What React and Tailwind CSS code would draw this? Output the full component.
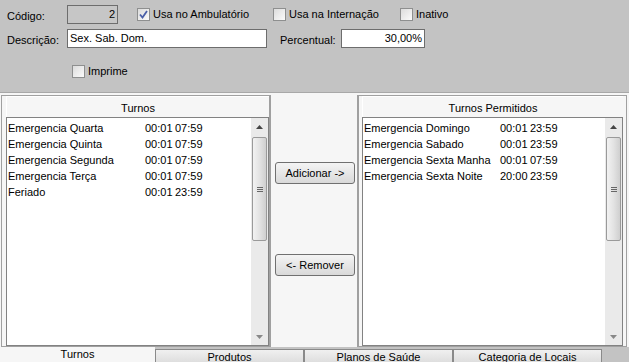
import React from 'react'

const FONT = { fontFamily: '"Liberation Sans", Arial, sans-serif' }

function Check({ checked }) {
  return (
    <span className="inline-flex h-[13px] w-[13px] shrink-0 items-center justify-center border border-[#8e8f8f] bg-gradient-to-br from-[#dcdcdc] to-[#fbfbfb]">
      {checked ? (
        <svg width="9" height="9" viewBox="0 0 9 9">
          <path d="M1 4.5 L3.5 7.5 L8 1" fill="none" stroke="#4a5fa8" strokeWidth="1.8" />
        </svg>
      ) : null}
    </span>
  )
}

function CheckLabel({ checked, label, className = '' }) {
  return (
    <div className={`flex items-center gap-[3px] whitespace-nowrap ${className}`}>
      <Check checked={checked} />
      <span>{label}</span>
    </div>
  )
}

function Scrollbar({ thumbTop = 19, thumbHeight = 104 }) {
  return (
    <div className="relative flex w-[17px] shrink-0 flex-col bg-[#eaeaea]">
      <div className="flex h-[17px] items-center justify-center">
        <svg width="7" height="4" viewBox="0 0 7 4">
          <path d="M0 4 L3.5 0 L7 4 Z" fill="#444" />
        </svg>
      </div>
      <div
        className="absolute left-[1px] right-[1px] rounded-[2px] border border-[#9a9a9a] bg-gradient-to-r from-[#f2f2f2] via-[#e3e3e3] to-[#cfcfcf]"
        style={{ top: thumbTop, height: thumbHeight }}
      >
        <div className="flex h-full flex-col items-center justify-center gap-[1px]">
          <div className="h-px w-[6px] bg-[#666]" />
          <div className="h-px w-[6px] bg-[#666]" />
          <div className="h-px w-[6px] bg-[#666]" />
        </div>
      </div>
      <div className="flex-1" />
      <div className="flex h-[17px] items-center justify-center">
        <svg width="7" height="4" viewBox="0 0 7 4">
          <path d="M0 0 L3.5 4 L7 0 Z" fill="#888" />
        </svg>
      </div>
    </div>
  )
}

function ListPanel({ title, rows, nameW, className = '' }) {
  return (
    <div className={`flex flex-col border border-[#a0a0a0] ${className}`}>
      <div className="flex h-[21px] justify-center border-t border-l border-white pt-[5px] leading-[13px]">{title}</div>
      <div className="flex flex-1 border border-[#828282] bg-white">
        <div className="flex-1 pt-[2px] pl-[1px]">
          {rows.map((r) => (
            <div key={r[0]} className="flex h-[16px] items-center whitespace-nowrap">
              <span className="shrink-0" style={{ width: nameW }}>{r[0]}</span>
              <span className="w-[30px] shrink-0">{r[1]}</span>
              <span>{r[2]}</span>
            </div>
          ))}
        </div>
        <Scrollbar />
      </div>
    </div>
  )
}

function WinButton({ children }) {
  return (
    <button
      type="button"
      className="flex h-[22px] w-[80px] items-center justify-center rounded-[3px] border border-[#707070] bg-gradient-to-b from-[#f4f4f4] to-[#d9d9d9]"
    >
      {children}
    </button>
  )
}

const turnos = [
  ['Emergencia Quarta', '00:01', '07:59'],
  ['Emergencia Quinta', '00:01', '07:59'],
  ['Emergencia Segunda', '00:01', '07:59'],
  ['Emergencia Terça', '00:01', '07:59'],
  ['Feriado', '00:01', '23:59'],
]

const permitidos = [
  ['Emergencia Domingo', '00:01', '23:59'],
  ['Emergencia Sabado', '00:01', '23:59'],
  ['Emergencia Sexta Manha', '00:01', '07:59'],
  ['Emergencia Sexta Noite', '20:00', '23:59'],
]

const tabs = ['Turnos', 'Produtos', 'Planos de Saúde', 'Categoria de Locais']

export default function App() {
  return (
    <div className="flex h-[362px] w-[629px] flex-col overflow-hidden bg-[#c3c3c3] text-[11px] text-black" style={FONT}>
      {/* cabeçalho */}
      <div className="flex h-[93px] shrink-0 flex-col border-b border-[#a8a8a8] pl-[7px] pt-[5px]">
        <div className="flex h-[19px] items-center">
          <span className="w-[60px] pt-[4px]">Código:</span>
          <div className="flex h-[19px] w-[51px] items-center justify-end border border-[#6d6d6d] bg-[#c6c6c6] pr-[2px]">2</div>
          <CheckLabel checked label="Usa no Ambulatório" className="ml-[19px] w-[136px]" />
          <CheckLabel label="Usa na Internação" className="w-[127px]" />
          <CheckLabel label="Inativo" />
        </div>
        <div className="mt-[5px] flex h-[19px] items-center">
          <span className="w-[60px] pt-[4px]">Descrição:</span>
          <div className="flex h-[19px] w-[200px] items-center border border-[#6d6d6d] bg-white pl-[2px]">Sex. Sab. Dom.</div>
          <span className="ml-[13px] w-[61px] pt-[4px]">Percentual:</span>
          <div className="flex h-[19px] w-[84px] items-center justify-end border border-[#6d6d6d] bg-white pr-[2px]">30,00%</div>
        </div>
        <CheckLabel label="Imprime" className="ml-[65px] mt-[15px]" />
      </div>

      {/* listas */}
      <div className="flex h-[254px] shrink-0 bg-[#f6f6f6] pl-[1px] pt-[2px] pr-[2px]">
        <ListPanel title="Turnos" rows={turnos} nameW={137} className="w-[269px] pl-[4px]" />
        <div className="flex w-[88px] flex-col border-x border-[#a0a0a0] pl-[4px] pt-[67px]">
          <WinButton>Adicionar -&gt;</WinButton>
          <div className="h-[70px]" />
          <WinButton>&lt;- Remover</WinButton>
        </div>
        <ListPanel title="Turnos Permitidos" rows={permitidos} nameW={136} className="flex-1 pl-[3px] pr-[3px]" />
      </div>

      {/* abas */}
      <div className="flex h-[15px] shrink-0">
        {tabs.map((t, i) =>
          i === 0 ? (
            <div key={t} className="flex w-[155px] justify-center bg-[#f6f6f6] pt-[1px] leading-[13px]">
              {t}
            </div>
          ) : (
            <div
              key={t}
              className="mt-[2px] flex h-[13px] w-[149px] justify-center border border-b-0 border-[#8a8a8a] bg-gradient-to-b from-[#f0f0f0] to-[#dedede] pt-[1px] leading-[12px]"
            >
              {t}
            </div>
          )
        )}
      </div>
    </div>
  )
}
